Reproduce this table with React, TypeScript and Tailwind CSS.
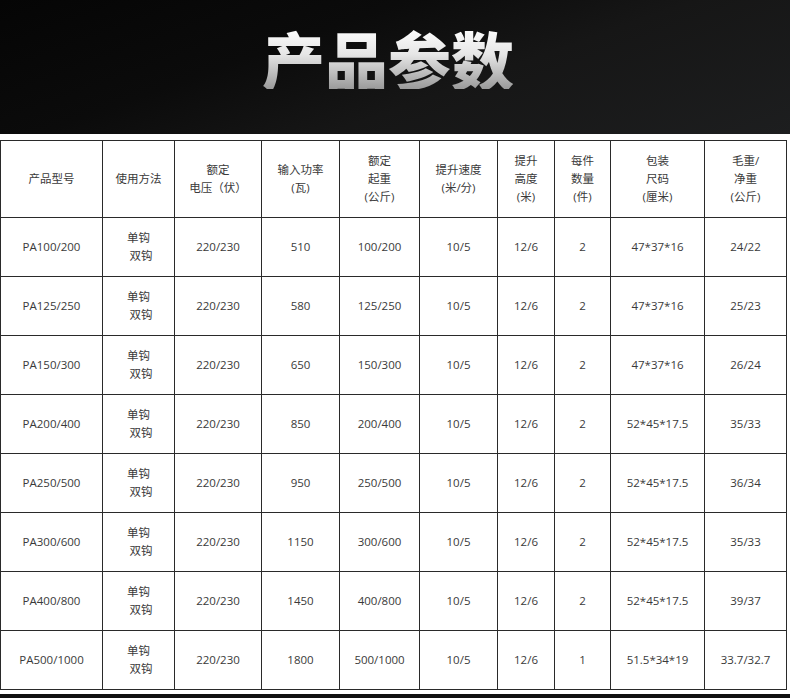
const headers: string[][] = [
  ["产品型号"],
  ["使用方法"],
  ["额定", "电压（伏）"],
  ["输入功率", "(瓦)"],
  ["额定", "起重", "(公斤)"],
  ["提升速度", "(米/分)"],
  ["提升", "高度", "(米)"],
  ["每件", "数量", "(件)"],
  ["包装", "尺码", "(厘米)"],
  ["毛重/", "净重", "(公斤)"],
]

const widths = ["w-[102px]", "w-[72px]", "w-[87px]", "w-[78px]", "w-[80px]", "w-[78px]", "w-[57px]", "w-[56px]", "w-[94px]", "w-[82px]"]

const rows = [
  ["PA100/200", "220/230", "510", "100/200", "10/5", "12/6", "2", "47*37*16", "24/22"],
  ["PA125/250", "220/230", "580", "125/250", "10/5", "12/6", "2", "47*37*16", "25/23"],
  ["PA150/300", "220/230", "650", "150/300", "10/5", "12/6", "2", "47*37*16", "26/24"],
  ["PA200/400", "220/230", "850", "200/400", "10/5", "12/6", "2", "52*45*17.5", "35/33"],
  ["PA250/500", "220/230", "950", "250/500", "10/5", "12/6", "2", "52*45*17.5", "36/34"],
  ["PA300/600", "220/230", "1150", "300/600", "10/5", "12/6", "2", "52*45*17.5", "35/33"],
  ["PA400/800", "220/230", "1450", "400/800", "10/5", "12/6", "2", "52*45*17.5", "39/37"],
  ["PA500/1000", "220/230", "1800", "500/1000", "10/5", "12/6", "1", "51.5*34*19", "33.7/32.7"],
]

const cell = "border border-[#2a2a2a] text-center align-middle p-0"

export default function App() {
  return (
    <div className="w-[790px] h-[698px] bg-white overflow-hidden font-['Open_Sans','Noto_Sans_CJK_SC',sans-serif] text-[#3a3a3a]">
      {/* Title band */}
      <div className="h-[134px] flex items-center justify-center bg-[linear-gradient(160deg,#050505_0%,#0b0b0b_35%,#161616_60%,#1d1e1f_100%)]">
        <h1 className="mt-[-20px] mr-[14px] text-[63px] leading-none font-black font-['Noto_Sans_CJK_SC',sans-serif] bg-[linear-gradient(180deg,#ffffff_0%,#e6e6e6_45%,#9a9a9a_100%)] bg-clip-text text-transparent">
          产品参数
        </h1>
      </div>

      {/* Spec table */}
      <div className="pt-[6px]">
        <table className="table-fixed border-collapse w-[786px] text-[11.5px]">
          <colgroup>
            {widths.map((w, i) => (
              <col key={i} className={w} />
            ))}
          </colgroup>
          <thead>
            <tr className="h-[77px]">
              {headers.map((lines, i) => (
                <th key={i} className={`${cell} font-normal leading-[18px]`}>
                  {lines.map((l, j) => (
                    <div key={j}>{l}</div>
                  ))}
                </th>
              ))}
            </tr>
          </thead>
          <tbody>
            {rows.map((r) => (
              <tr key={r[0]} className="h-[59px]">
                <td className={cell}>{r[0]}</td>
                <td className={`${cell} leading-[18px]`}>
                  <div>单钩</div>
                  <div className="pl-[5px]">双钩</div>
                </td>
                {r.slice(1).map((v, i) => (
                  <td key={i} className={cell}>
                    {v}
                  </td>
                ))}
              </tr>
            ))}
          </tbody>
        </table>
      </div>

      {/* bottom strip */}
      <div className="mt-[4px] h-[10px] bg-[#111]" />
    </div>
  )
}
